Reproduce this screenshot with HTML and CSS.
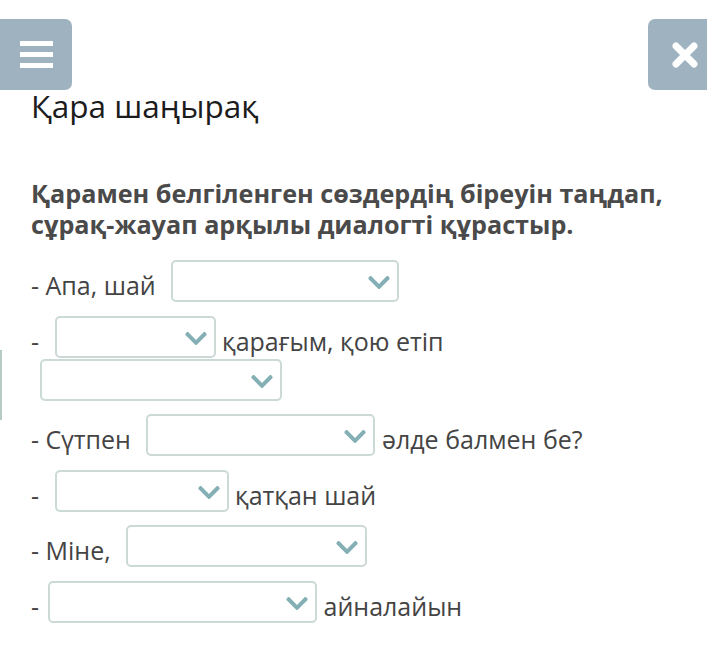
FILE: index.html
```html
<!DOCTYPE html>
<html lang="kk">
<head>
<meta charset="utf-8">
<title>Қара шаңырақ</title>
<link rel="stylesheet" href="styles.css">
</head>
<body>
<div class="toolbar">
  <button class="btn btn-menu" aria-label="Мәзір">
    <svg width="33" height="27" viewBox="0 0 33 27"><rect x="0" y="0" width="33" height="5" fill="#fff"/><rect x="0" y="11" width="33" height="5" fill="#fff"/><rect x="0" y="22" width="33" height="5" fill="#fff"/></svg>
  </button>
  <button class="btn btn-close" aria-label="Жабу">
    <svg width="28" height="28" viewBox="0 0 28 28"><path d="M5 5 L23 23 M23 5 L5 23" stroke="#fff" stroke-width="7" stroke-linecap="round"/></svg>
  </button>
</div>
<div class="edge"></div>
<main class="content">
  <h1 class="title">Қара шаңырақ</h1>
  <h2 class="task">Қарамен белгіленген сөздердің біреуін таңдап, сұрақ-жауап арқылы диалогті құрастыр.</h2>
  <p class="line">- Апа, шай <span class="dd" style="width:228px"><svg class="chev" viewBox="0 123 448 266"><path d="M207.029 381.476L12.686 187.132c-9.373-9.373-9.373-24.569 0-33.941l22.667-22.667c9.357-9.357 24.522-9.375 33.901-.04L224 284.505l154.745-154.021c9.379-9.335 24.544-9.317 33.901.04l22.667 22.667c9.373 9.373 9.373 24.569 0 33.941L240.971 381.476c-9.373 9.372-24.569 9.372-33.942 0z"/></svg></span></p>
  <p class="line">- <span class="dd" style="width:161px"><svg class="chev" viewBox="0 123 448 266"><path d="M207.029 381.476L12.686 187.132c-9.373-9.373-9.373-24.569 0-33.941l22.667-22.667c9.357-9.357 24.522-9.375 33.901-.04L224 284.505l154.745-154.021c9.379-9.335 24.544-9.317 33.901.04l22.667 22.667c9.373 9.373 9.373 24.569 0 33.941L240.971 381.476c-9.373 9.372-24.569 9.372-33.942 0z"/></svg></span> қарағым, қою етіп <span class="dd" style="width:242px"><svg class="chev" viewBox="0 123 448 266"><path d="M207.029 381.476L12.686 187.132c-9.373-9.373-9.373-24.569 0-33.941l22.667-22.667c9.357-9.357 24.522-9.375 33.901-.04L224 284.505l154.745-154.021c9.379-9.335 24.544-9.317 33.901.04l22.667 22.667c9.373 9.373 9.373 24.569 0 33.941L240.971 381.476c-9.373 9.372-24.569 9.372-33.942 0z"/></svg></span></p>
  <p class="line">- Сүтпен <span class="dd" style="width:229px"><svg class="chev" viewBox="0 123 448 266"><path d="M207.029 381.476L12.686 187.132c-9.373-9.373-9.373-24.569 0-33.941l22.667-22.667c9.357-9.357 24.522-9.375 33.901-.04L224 284.505l154.745-154.021c9.379-9.335 24.544-9.317 33.901.04l22.667 22.667c9.373 9.373 9.373 24.569 0 33.941L240.971 381.476c-9.373 9.372-24.569 9.372-33.942 0z"/></svg></span> әлде балмен бе?</p>
  <p class="line">- <span class="dd" style="width:174px"><svg class="chev" viewBox="0 123 448 266"><path d="M207.029 381.476L12.686 187.132c-9.373-9.373-9.373-24.569 0-33.941l22.667-22.667c9.357-9.357 24.522-9.375 33.901-.04L224 284.505l154.745-154.021c9.379-9.335 24.544-9.317 33.901.04l22.667 22.667c9.373 9.373 9.373 24.569 0 33.941L240.971 381.476c-9.373 9.372-24.569 9.372-33.942 0z"/></svg></span> қатқан шай</p>
  <p class="line">- Міне, <span class="dd" style="width:241px"><svg class="chev" viewBox="0 123 448 266"><path d="M207.029 381.476L12.686 187.132c-9.373-9.373-9.373-24.569 0-33.941l22.667-22.667c9.357-9.357 24.522-9.375 33.901-.04L224 284.505l154.745-154.021c9.379-9.335 24.544-9.317 33.901.04l22.667 22.667c9.373 9.373 9.373 24.569 0 33.941L240.971 381.476c-9.373 9.372-24.569 9.372-33.942 0z"/></svg></span></p>
  <p class="line">-<span class="dd" style="width:269px"><svg class="chev" viewBox="0 123 448 266"><path d="M207.029 381.476L12.686 187.132c-9.373-9.373-9.373-24.569 0-33.941l22.667-22.667c9.357-9.357 24.522-9.375 33.901-.04L224 284.505l154.745-154.021c9.379-9.335 24.544-9.317 33.901.04l22.667 22.667c9.373 9.373 9.373 24.569 0 33.941L240.971 381.476c-9.373 9.372-24.569 9.372-33.942 0z"/></svg></span> айналайын</p>
</main>
</body>
</html>
```

FILE: styles.css
```css
html, body {
  margin: 0;
  padding: 0;
  background: #ffffff;
}

body {
  font-family: "Open Sans", "Noto Sans", sans-serif;
  color: #444444;
  position: relative;
  min-height: 660px;
  overflow: hidden;
}

.toolbar {
  position: absolute;
  top: 19px;
  left: 0;
  right: 0;
  height: 71px;
  z-index: 2;
}

.btn {
  position: absolute;
  top: 0;
  height: 71px;
  border: 0;
  padding: 0;
  background: #9eb2c0;
  display: flex;
  align-items: center;
  justify-content: center;
  cursor: pointer;
}

.btn-menu {
  left: 0;
  width: 72px;
  border-radius: 0 7px 7px 0;
}

.btn-close {
  left: 648px;
  width: 72px;
  border-radius: 7px 0 0 7px;
  justify-content: flex-start;
  padding-left: 23px;
}

.edge {
  position: absolute;
  left: 0;
  top: 350px;
  width: 2px;
  height: 70px;
  background: #b5cbc4;
}

.content {
  padding: 88px 20px 0 31px;
}

.title {
  margin: 0;
  font-size: 31.5px;
  line-height: 36px;
  font-weight: 400;
  color: #1c1c1c;
}

.task {
  margin: 54px 0 20px;
  font-size: 25.2px;
  line-height: 31px;
  font-weight: 700;
  color: #4a4a4a;
}

.line {
  margin: 0 0 12.5px;
  font-size: 25px;
  line-height: 35px;
  color: #444444;
}

.dd {
  display: inline-block;
  box-sizing: border-box;
  height: 42px;
  margin-left: 9px;
  border: 2px solid #cbd9d7;
  border-radius: 5px;
  background: #ffffff;
  vertical-align: -7px;
  overflow: hidden;
  position: relative;
}

.chev {
  position: absolute;
  right: 7px;
  top: 14px;
  width: 22px;
  height: 13px;
  fill: #84afb4;
}
```
